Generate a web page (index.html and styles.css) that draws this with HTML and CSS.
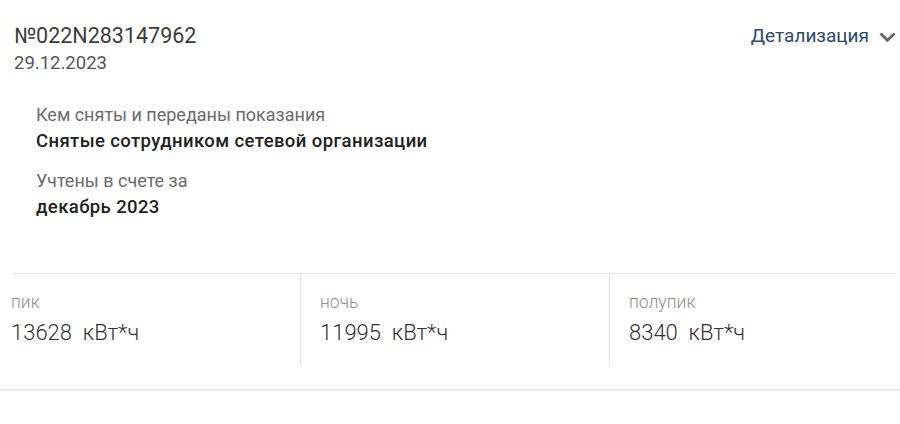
FILE: index.html
```html
<!DOCTYPE html>
<html lang="ru">
<head>
  <meta charset="UTF-8" />
  <title>Показания</title>
  <link rel="stylesheet" href="styles.css">
</head>
<body>
  <div class="card">
    <div class="card-head">
      <div class="doc">
        <div class="doc-number">№022N283147962</div>
        <div class="doc-date">29.12.2023</div>
      </div>
      <a class="details-link" href="#">
        Детализация
        <svg class="chevron" width="17" height="10" viewBox="0 0 17 10">
          <path d="M1.5 1.5 L8.5 8.3 L15.5 1.5" fill="none" stroke="#666" stroke-width="2.8"/>
        </svg>
      </a>
    </div>

    <div class="info">
      <div class="info-item">
        <div class="info-label">Кем сняты и переданы показания</div>
        <div class="info-value">Снятые сотрудником сетевой организации</div>
      </div>
      <div class="info-item">
        <div class="info-label">Учтены в счете за</div>
        <div class="info-value">декабрь 2023</div>
      </div>
    </div>

    <div class="meters">
      <div class="meter">
        <div class="meter-label">пик</div>
        <div class="meter-value">13628&nbsp; кВт*ч</div>
      </div>
      <div class="meter">
        <div class="meter-label">ночь</div>
        <div class="meter-value">11995&nbsp; кВт*ч</div>
      </div>
      <div class="meter">
        <div class="meter-label">полупик</div>
        <div class="meter-value">8340&nbsp; кВт*ч</div>
      </div>
    </div>
  </div>
</body>
</html>
```

FILE: styles.css
```css
* {
  margin: 0;
  padding: 0;
  box-sizing: border-box;
  font-family: Roboto, 'Liberation Sans', sans-serif;
}

body {
  background: #fff;
  width: 900px;
  height: 424px;
  overflow: hidden;
}

.card {
  border-bottom: 1px solid #e2e2e2;
  box-shadow: 0 1px 1px rgba(0,0,0,0.04);
}

.card-head {
  display: flex;
  justify-content: space-between;
  align-items: flex-start;
  padding: 23px 4px 0 14px;
}

.doc-number {
  font-size: 21.5px;
  line-height: 26px;
  color: #3d3d3d;
}

.doc-date {
  font-size: 18.5px;
  line-height: 28px;
  color: #555;
}

.details-link {
  display: flex;
  align-items: center;
  gap: 10px;
  font-size: 19px;
  line-height: 26px;
  color: #2a4a6e;
  text-decoration: none;
}

.chevron {
  display: block;
  margin-top: 1px;
}

.info {
  display: flex;
  flex-direction: column;
  gap: 14px;
  padding: 25px 0 0 36px;
}

.info-label {
  font-size: 18px;
  line-height: 26px;
  color: #6b6b6b;
}

.info-value {
  font-size: 18.5px;
  line-height: 26px;
  font-weight: 500;
  letter-spacing: 0.4px;
  color: #222;
}

.meters {
  display: grid;
  grid-template-columns: 300px 309px 1fr;
  margin-top: 53px;
  padding-top: 1px;
  height: 116px;
  background: linear-gradient(#e2e2e2, #e2e2e2) 13px 0 / 883px 1px no-repeat;
}

.meter {
  height: 92px;
  padding: 16px 0 0 19px;
  border-left: 1px solid #e2e2e2;
}

.meter:first-child {
  border-left: none;
  padding-left: 11px;
}

.meter-label {
  font-size: 17.5px;
  line-height: 24px;
  font-weight: 300;
  color: #8e8e8e;
}

.meter-value {
  margin-top: 5px;
  font-size: 22px;
  line-height: 28px;
  font-weight: 300;
  color: #333;
}
```
